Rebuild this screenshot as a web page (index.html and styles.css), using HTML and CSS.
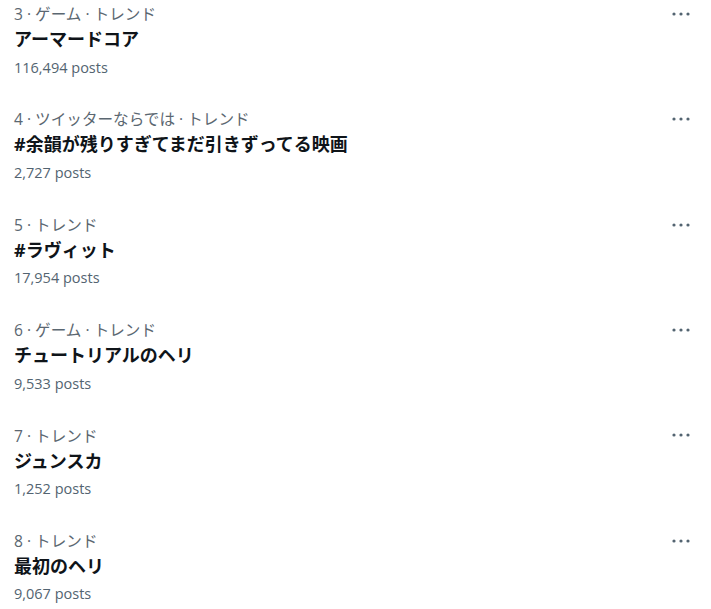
FILE: index.html
```html
<!DOCTYPE html>
<html lang="ja">
<head>
    <meta charset="UTF-8">
    <meta name="viewport" content="width=device-width, initial-scale=1.0">
    <title>トレンド</title>
    <link rel="stylesheet" href="styles.css">
</head>
<body>
    <div class="trends">
        <div class="trend">
            <div class="trend-body">
                <div class="trend-meta">3 · ゲーム · トレンド</div>
                <div class="trend-title">アーマードコア</div>
                <div class="trend-count">116,494 posts</div>
            </div>
            <svg class="more" viewBox="0 0 24 24"><circle cx="5" cy="12" r="1.6"/><circle cx="12" cy="12" r="1.6"/><circle cx="19" cy="12" r="1.6"/></svg>
        </div>

        <div class="trend">
            <div class="trend-body">
                <div class="trend-meta">4 · ツイッターならでは · トレンド</div>
                <div class="trend-title">#余韻が残りすぎてまだ引きずってる映画</div>
                <div class="trend-count">2,727 posts</div>
            </div>
            <svg class="more" viewBox="0 0 24 24"><circle cx="5" cy="12" r="1.6"/><circle cx="12" cy="12" r="1.6"/><circle cx="19" cy="12" r="1.6"/></svg>
        </div>

        <div class="trend">
            <div class="trend-body">
                <div class="trend-meta">5 · トレンド</div>
                <div class="trend-title">#ラヴィット</div>
                <div class="trend-count">17,954 posts</div>
            </div>
            <svg class="more" viewBox="0 0 24 24"><circle cx="5" cy="12" r="1.6"/><circle cx="12" cy="12" r="1.6"/><circle cx="19" cy="12" r="1.6"/></svg>
        </div>

        <div class="trend">
            <div class="trend-body">
                <div class="trend-meta">6 · ゲーム · トレンド</div>
                <div class="trend-title">チュートリアルのヘリ</div>
                <div class="trend-count">9,533 posts</div>
            </div>
            <svg class="more" viewBox="0 0 24 24"><circle cx="5" cy="12" r="1.6"/><circle cx="12" cy="12" r="1.6"/><circle cx="19" cy="12" r="1.6"/></svg>
        </div>

        <div class="trend">
            <div class="trend-body">
                <div class="trend-meta">7 · トレンド</div>
                <div class="trend-title">ジュンスカ</div>
                <div class="trend-count">1,252 posts</div>
            </div>
            <svg class="more" viewBox="0 0 24 24"><circle cx="5" cy="12" r="1.6"/><circle cx="12" cy="12" r="1.6"/><circle cx="19" cy="12" r="1.6"/></svg>
        </div>

        <div class="trend">
            <div class="trend-body">
                <div class="trend-meta">8 · トレンド</div>
                <div class="trend-title">最初のヘリ</div>
                <div class="trend-count">9,067 posts</div>
            </div>
            <svg class="more" viewBox="0 0 24 24"><circle cx="5" cy="12" r="1.6"/><circle cx="12" cy="12" r="1.6"/><circle cx="19" cy="12" r="1.6"/></svg>
        </div>
    </div>
</body>
</html>
```

FILE: styles.css
```css
* {
    margin: 0;
    padding: 0;
    box-sizing: border-box;
}

body {
    background-color: #ffffff;
    font-family: 'Open Sans', 'Noto Sans CJK JP', sans-serif;
    color: #0f1419;
}

.trends {
    display: flex;
    flex-direction: column;
}

.trend {
    display: flex;
    justify-content: space-between;
    align-items: flex-start;
    height: 105.4px;
    padding: 5px 18px 0 14px;
}

.trend-meta {
    font-size: 15.6px;
    line-height: 18px;
    color: #5b6771;
}

.trend-title {
    margin-top: 4px;
    font-size: 18px;
    line-height: 24px;
    font-weight: 700;
    color: #0f1419;
}

.trend-count {
    margin-top: 7.5px;
    font-size: 14.5px;
    line-height: 18px;
    color: #536471;
}

.more {
    width: 24px;
    height: 24px;
    margin-top: -3.2px;
    fill: #536471;
}
```
